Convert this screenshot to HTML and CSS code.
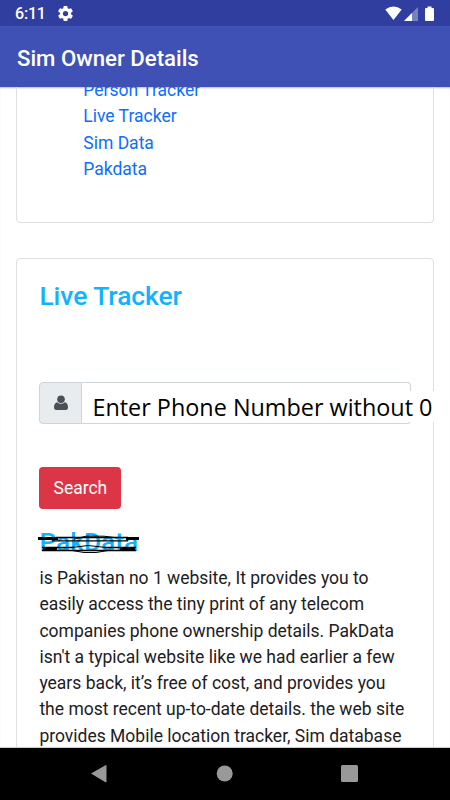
FILE: index.html
```html
<!DOCTYPE html>
<html lang="en">
<head>
<meta charset="utf-8">
<title>Sim Owner Details</title>
<link rel="stylesheet" href="styles.css">
</head>
<body>
<div class="screen">
  <div class="status">
    <span class="time">6:11</span>
    <svg class="gear" width="15" height="15" viewBox="2 2 20 20"><path fill="#fff" fill-rule="evenodd" d="M19.400 13a7.700 7.700 0 0 0 0-2l2.100-1.650c.2-.15.25-.42.120-.64l-2-3.460a.5.500 0 0 0-.6-.22l-2.500 1a7.300 7.300 0 0 0-1.700-.98l-.38-2.650A.490.490 0 0 0 14 2h-4a.490.490 0 0 0-.49.420l-.38 2.650c-.6.250-1.170.580-1.700.980l-2.490-1a.490.490 0 0 0-.6.220l-2 3.460c-.13.220-.07.490.120.640L4.570 11a7.900 7.900 0 0 0 0 2l-2.110 1.650a.5.500 0 0 0-.12.640l2 3.460c.12.220.380.300.600.220l2.490-1c.52.400 1.080.730 1.700.980l.38 2.650c.03.240.240.420.490.420h4c.250 0 .460-.18.490-.42l.38-2.650c.61-.25 1.170-.59 1.690-.98l2.490 1c.23.090.490 0 .610-.22l2-3.460a.5.500 0 0 0-.12-.64zM12 15.500a3.500 3.500 0 1 1 0-7 3.500 3.500 0 0 1 0 7z"/></svg>
    <svg class="signals" width="54" height="18" viewBox="0 0 54 18"><path fill="#fff" d="M1.300 4.500Q9.500-1.500 17.700 4.500L9.500 15z"/><path fill="#fff" opacity=".35" d="M34 2v14H20z"/><path fill="#fff" d="M28 8v8h-8z"/><path fill="#fff" d="M43.500 1.500h4V3H49a1 1 0 0 1 1 1v11a1 1 0 0 1-1 1h-7a1 1 0 0 1-1-1V4a1 1 0 0 1 1-1h1.500z"/></svg>
  </div>
  <header class="appbar"><h1>Sim Owner Details</h1></header>
  <main class="content">
    <section class="card links">
      <a>Person Tracker</a>
      <a>Live Tracker</a>
      <a>Sim Data</a>
      <a>Pakdata</a>
    </section>
    <section class="card tracker">
      <h2>Live Tracker</h2>
      <div class="group">
        <span class="addon"><svg width="14" height="16" viewBox="0 0 14 16"><circle cx="7" cy="4.200" r="3.800"/><path d="M3.300 7.200C1 7.500 0 9.500 0 12.500 0 14 .8 15 2.200 15h9.600c1.400 0 2.200-1 2.200-2.500 0-3-1-5-3.300-5.300a5 5 0 0 1-7.400 0z"/></svg></span>
        <div class="field"><span class="label">Enter Phone Number without 0</span></div>
      </div>
      <span class="button">Search</span>
      <h3><span>PakData</span><svg class="scribble" width="102" height="24" viewBox="0 0 102 24" fill="none" stroke="#000"><path stroke-width="3" d="M0 8.500h20M88 8.500h13"/><path stroke-width="1.300" d="M18 7.500h72M14 10.800h76M4 20.500h94M4 17.500h32M66 17.500h32"/><path stroke-width="3" d="M5 18.800h14M82 18.800h15"/><path stroke-width="1" d="M36 9.200l12-3h18l12 1.500M34 17.500l16-2 18 2M34 20.500l12 2h12l12-2"/></svg></h3>
      <p>is Pakistan no 1 website, It provides you to<br>easily access the tiny print of any telecom<br>companies phone ownership details. PakData<br>isn't a typical website like we had earlier a few<br>years back, it’s free of cost, and provides you<br>the most recent up-to-date details. the web site<br>provides Mobile location tracker, Sim database</p>
    </section>
  </main>
  <nav class="nav">
    <svg width="450" height="52" viewBox="0 0 450 52" fill="#999"><path d="M91 25.500 105.500 17.200q1-.5 1 .5v16q0 1-1 .5z"/><circle cx="224.700" cy="25.500" r="8"/><rect x="341" y="17" width="17" height="17" rx="1.500"/></svg>
  </nav>
</div>
</body>
</html>
```
FILE: styles.css
```css
* { box-sizing: border-box; }
body { margin: 0; background: #fff; color: #1c2024; font-family: Roboto, "Liberation Sans", sans-serif; }
h1, h2, h3, p { margin: 0; font-weight: 500; }
svg { display: block; }
.screen { width: 450px; height: 800px; overflow: hidden; display: flex; flex-direction: column; }
.status { flex: none; height: 26px; background: #303f9f; display: flex; align-items: center; padding: 1px 12px 0 15px; color: #fff; }
.time { font-size: 16px; font-weight: 500; width: 43px; letter-spacing: -0.2px; }
.signals { margin-left: auto; }
.appbar { flex: none; height: 61px; background: #3f51b5; color: #fff; display: flex; align-items: center; padding: 2px 17px 0; }
h1 { font-size: 22.200px; }
.content { flex: none; height: 661px; overflow: hidden; padding: 0 16px; border-bottom: 1px solid #ccc; box-shadow: inset 0 2px 2px -1px #bbb; }
.card { border: 1px solid #dfdfdf; border-radius: 4px; }
.links { margin-top: -40px; height: 176px; padding: 29px 0 0 66.300px; display: flex; flex-direction: column; font-size: 17.500px; line-height: 26.250px; color: #0d6efd; }
.tracker { margin-top: 35px; height: 520px; padding: 22px 22px 22px 22.400px; }
h2 { font-size: 26.300px; line-height: 31px; color: #10b3fc; }
.group { display: flex; width: 372px; height: 42px; margin-top: 70px; }
.addon { width: 43px; border: 1px solid #ced4da; border-radius: 4px 0 0 4px; background: #e9ecef; display: flex; align-items: center; justify-content: center; }
.addon svg { fill: #495057; }
.field { width: 329px; border: 1px solid #ced4da; border-left: 0; border-radius: 0 4px 4px 0; padding: 8px 0 0 5px; }
.label { display: block; width: 354px; height: 31px; padding-left: 5px; background: #fff; color: #000; font: 23.400px/32px "Open Sans", "Noto Sans", sans-serif; white-space: nowrap; position: relative; z-index: 1; }
.button { display: flex; align-items: center; justify-content: center; width: 82px; height: 42px; margin-top: 43px; border-radius: 4px; background: #dc3545; color: #fff; font-size: 17.500px; }
h3 { position: relative; margin-top: 18px; height: 32px; font-size: 26.300px; line-height: 31px; color: #10b3fc; }
.scribble { position: absolute; left: -1px; top: 3px; }
p { margin-top: 6px; font-size: 17.500px; line-height: 26.250px; font-weight: 400; white-space: nowrap; }
.nav { flex: none; height: 52px; background: #000; }
```
